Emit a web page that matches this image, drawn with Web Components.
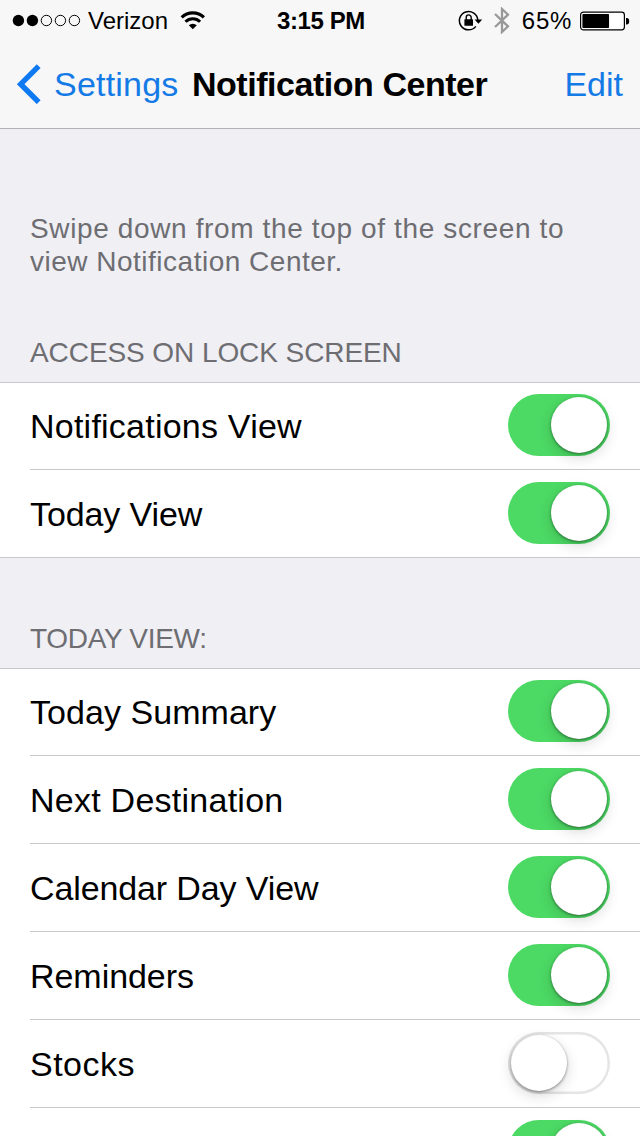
<!DOCTYPE html>
<html lang="en">
<head>
<meta charset="utf-8">
<title>Notification Center</title>
<style>
  html, body {
    margin: 0;
    width: 640px;
    height: 1136px;
    overflow: hidden;
  }
  body {
    background: #efeff4;
    color: #000;
    font-family: "Liberation Sans", Arial, sans-serif;
    font-size: 34px;
  }
</style>
</head>
<body>
<settings-screen>
  <status-bar slot="bar" carrier="Verizon" time="3:15 PM" battery="65"></status-bar>
  <nav-bar slot="bar" back="Settings" action="Edit">Notification Center</nav-bar>

  <settings-note>
    <span style="letter-spacing: 0.63px">Swipe down from the top of the screen to</span>
    <span style="letter-spacing: 0.5px">view Notification Center.</span>
  </settings-note>

  <settings-group label="ACCESS ON LOCK SCREEN" style="--head: 104px; --head-track: -0.08px">
    <settings-row on style="--track: 0.23px">Notifications View</settings-row>
    <settings-row on last style="--track: -0.1px">Today View</settings-row>
  </settings-group>

  <settings-group label="TODAY VIEW:" style="--head: 110px; --head-track: -0.3px">
    <settings-row on style="--track: 0.05px">Today Summary</settings-row>
    <settings-row on style="--track: 0.25px">Next Destination</settings-row>
    <settings-row on style="--track: -0.12px">Calendar Day View</settings-row>
    <settings-row on style="--track: -0.05px">Reminders</settings-row>
    <settings-row style="--track: 0.5px">Stocks</settings-row>
    <settings-row on></settings-row>
  </settings-group>
</settings-screen>

<script>
class SettingsScreen extends HTMLElement {
  constructor() {
    super();
    this.attachShadow({ mode: 'open' });
    this.shadowRoot.innerHTML = `
      <style>
        :host { display: flex; flex-direction: column; height: 1136px; overflow: hidden; }
        header { flex: none; background: #f7f7f7; border-bottom: 1px solid #b2b2b2; }
        main { flex: none; }
      </style>
      <header><slot name="bar"></slot></header>
      <main><slot></slot></main>
    `;
  }
}

class StatusBar extends HTMLElement {
  constructor() {
    super();
    this.attachShadow({ mode: 'open' });
  }

  connectedCallback() {
    const level = Number(this.getAttribute('battery'));
    const dots = [0, 1, 2, 3, 4].map(i => `
      <circle cx="${6.4 + i * 14}" cy="6.5" r="${i < 2 ? 5.7 : 5.2}"
        fill="${i < 2 ? '#000' : 'none'}" stroke="${i < 2 ? 'none' : '#000'}"/>
    `).join('');

    this.shadowRoot.innerHTML = `
      <style>
        :host {
          box-sizing: border-box;
          display: grid;
          grid-template-columns: 1fr auto 1fr;
          align-items: center;
          height: 40px;
          padding: 1px 10px 0 12px;
          font-size: 24px;
          line-height: 26px;
        }
        .side { display: flex; align-items: center; }
        .right { justify-content: flex-end; }
        svg { display: block; flex: none; }
        .carrier { margin: 0 12px 0 7px; }
        .time { font-weight: bold; letter-spacing: -0.4px; }
        .lock { margin-right: 11px; }
        .bluetooth { margin-right: 12px; }
        .percent { margin-right: 8px; letter-spacing: 0.7px; }
      </style>
      <div class="side">
        <svg width="69" height="13">${dots}</svg>
        <span class="carrier">${this.getAttribute('carrier')}</span>
        <svg width="26" height="20" viewBox="0 1 26 20">
          <path d="M1.7 7.4A16 16 0 0 1 23.9 7.4" fill="none" stroke="#000" stroke-width="3.2"/>
          <path d="M5.5 11.7A10.3 10.3 0 0 1 20.1 11.7" fill="none" stroke="#000" stroke-width="3"/>
          <path d="M8.8 15.2A6 6 0 0 1 16.8 15.2L12.8 19.2Z"/>
        </svg>
      </div>
      <div class="time">${this.getAttribute('time')}</div>
      <div class="side right">
        <svg class="lock" width="25" height="22" viewBox="0 0 25 22">
          <path d="M19.8 10.2A9.2 9.2 0 1 0 17.8 16.4" fill="none" stroke="#000" stroke-width="1.5"/>
          <path d="M16.6 9.6H24.2L20.4 13.8Z"/>
          <rect x="6.4" y="9.2" width="8.6" height="6.6" rx=".5"/>
          <path d="M8.2 10V7.4a2.5 2.5 0 0 1 5 0V10" fill="none" stroke="#000" stroke-width="1.4"/>
        </svg>
        <svg class="bluetooth" width="16" height="27" viewBox="0 0 16 27">
          <path d="M1 7L14 19.3L8 25V2L14 7.7L1 20" fill="none" stroke="#999" stroke-width="2.3"/>
        </svg>
        <span class="percent">${level}%</span>
        <svg width="50" height="20" viewBox="0 0 50 20">
          <rect x=".6" y="1.1" width="43.8" height="17.8" rx="2.8" fill="#fff" stroke="#000" stroke-width="1.2"/>
          <rect x="2.4" y="3" width="${41 * level / 100}" height="14" rx=".8"/>
          <path d="M46 7h.6a2.6 3.2 0 0 1 0 6.4H46Z"/>
        </svg>
      </div>
    `;
  }
}

class NavBar extends HTMLElement {
  constructor() {
    super();
    this.attachShadow({ mode: 'open' });
  }

  connectedCallback() {
    this.shadowRoot.innerHTML = `
      <style>
        :host {
          box-sizing: border-box;
          display: flex;
          align-items: center;
          height: 88px;
          padding: 0 17px 0 16px;
          line-height: 40px;
        }
        .back, .action { color: #147be6; }
        .back { display: flex; align-items: center; letter-spacing: 0.2px; }
        .back svg { margin-right: 13px; }
        .title { margin-left: 13.5px; font-weight: bold; letter-spacing: -0.46px; white-space: nowrap; }
        .action { margin-left: auto; }
      </style>
      <div class="back">
        <svg width="25" height="40" viewBox="0 0 25 40">
          <path d="M22.7 2.2L4.7 20.2L22.7 38.2" fill="none" stroke="#0f79f2" stroke-width="5.4"/>
        </svg>
        <span>${this.getAttribute('back')}</span>
      </div>
      <div class="title"><slot></slot></div>
      <div class="action">${this.getAttribute('action')}</div>
    `;
  }
}

class SettingsNote extends HTMLElement {
  constructor() {
    super();
    this.attachShadow({ mode: 'open' });
    this.shadowRoot.innerHTML = `
      <style>
        :host {
          display: block;
          padding: 83px 30px 0;
          color: #6d6d72;
          font-size: 28px;
          line-height: 33px;
        }
        ::slotted(span) { display: block; white-space: nowrap; }
      </style>
      <slot></slot>
    `;
  }
}

class SettingsGroup extends HTMLElement {
  constructor() {
    super();
    this.attachShadow({ mode: 'open' });
  }

  connectedCallback() {
    this.shadowRoot.innerHTML = `
      <style>
        :host { display: block; }
        .head {
          box-sizing: border-box;
          display: flex;
          align-items: flex-end;
          height: var(--head);
          padding: 0 30px 13px;
          color: #6d6d72;
          font-size: 28px;
          line-height: 32px;
          letter-spacing: var(--head-track, 0);
        }
        .list {
          background: #fff;
          box-shadow: inset 0 1px #c8c7cc;
        }
      </style>
      <div class="head">${this.getAttribute('label')}</div>
      <div class="list"><slot></slot></div>
    `;
  }
}

class SettingsRow extends HTMLElement {
  constructor() {
    super();
    this.attachShadow({ mode: 'open' });
  }

  connectedCallback() {
    this.shadowRoot.innerHTML = `
      <style>
        :host {
          box-sizing: border-box;
          display: flex;
          justify-content: space-between;
          height: 88px;
          margin-left: 30px;
          padding: 0 30px 0 0;
          border-bottom: 1px solid #c8c7cc;
        }
        /* the closing rule runs edge to edge */
        :host([last]) { margin-left: 0; padding-left: 30px; }
        .label { line-height: 88px; letter-spacing: var(--track, 0); white-space: nowrap; }
        toggle-switch { margin-top: 12px; }
      </style>
      <div class="label"><slot></slot></div>
      <toggle-switch ${this.hasAttribute('on') ? 'on' : ''}></toggle-switch>
    `;
  }
}

class ToggleSwitch extends HTMLElement {
  constructor() {
    super();
    this.attachShadow({ mode: 'open' });
    this.shadowRoot.innerHTML = `
      <style>
        :host {
          box-sizing: border-box;
          display: flex;
          width: 102px;
          height: 62px;
          padding: 3px;
          border-radius: 31px;
          background: #fff;
          box-shadow: inset 0 0 0 2.5px #e5e5e5;
        }
        :host([on]) {
          justify-content: flex-end;
          background: #4cd964;
          box-shadow: none;
        }
        .knob {
          width: 56px;
          height: 56px;
          border-radius: 50%;
          background: #fff;
          box-shadow: 0 1px 3px rgba(0, 0, 0, 0.45), 0 5px 14px rgba(0, 0, 0, 0.15);
        }
      </style>
      <div class="knob"></div>
    `;
  }
}

customElements.define('settings-screen', SettingsScreen);
customElements.define('status-bar', StatusBar);
customElements.define('nav-bar', NavBar);
customElements.define('settings-note', SettingsNote);
customElements.define('settings-group', SettingsGroup);
customElements.define('settings-row', SettingsRow);
customElements.define('toggle-switch', ToggleSwitch);
</script>
</body>
</html>
